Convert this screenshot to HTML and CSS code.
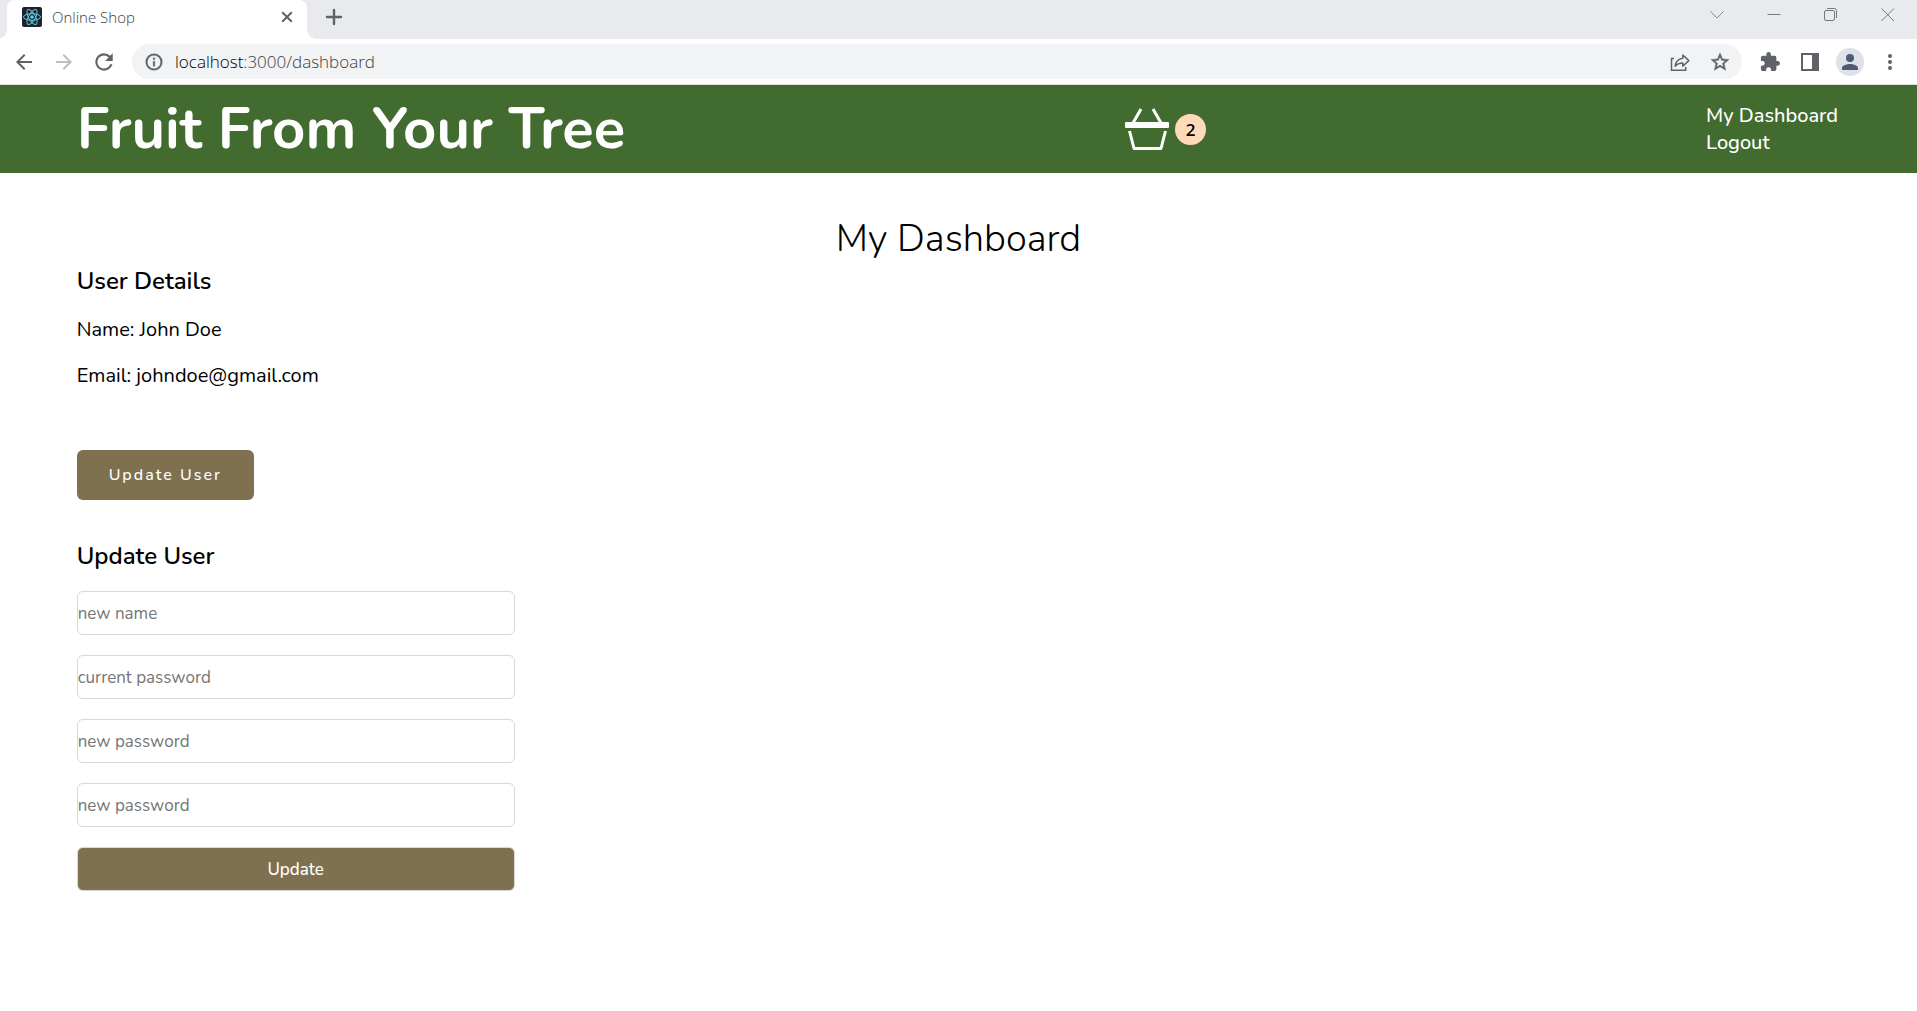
FILE: index.html
```html
<!DOCTYPE html>
<html lang="en">
<head>
<meta charset="utf-8">
<meta name="viewport" content="width=device-width, initial-scale=1">
<title>Online Shop</title>
<link rel="stylesheet" href="styles.css">
</head>
<body>
<div class="browser">
  <div class="tab-strip">
    <div class="tab">
      <svg class="favicon" viewBox="0 0 20 20" width="20" height="20" aria-hidden="true">
        <rect width="20" height="20" rx="2" fill="#20232a"/>
        <g fill="none" stroke="#5fc9e0" stroke-width="1">
          <ellipse cx="10" cy="10" rx="8.5" ry="3.3"/>
          <ellipse cx="10" cy="10" rx="8.5" ry="3.3" transform="rotate(60 10 10)"/>
          <ellipse cx="10" cy="10" rx="8.5" ry="3.3" transform="rotate(120 10 10)"/>
        </g>
        <circle cx="10" cy="10" r="1.7" fill="#61dafb"/>
      </svg>
      <span class="tab-title">Online Shop</span>
      <button class="icon-button" type="button" aria-label="Close tab">
        <svg viewBox="0 0 24 24" width="24" height="24"><path d="M7.2 7.2l9.6 9.6M16.8 7.2l-9.6 9.6" fill="none" stroke="#5f6368" stroke-width="2"/></svg>
      </button>
    </div>
    <button class="icon-button new-tab" type="button" aria-label="New tab">
      <svg viewBox="0 0 24 24" width="24" height="24"><path d="M12 5v14M5 12h14" fill="none" stroke="#5f6368" stroke-width="2.4" stroke-linecap="round"/></svg>
    </button>
    <div class="window-controls">
      <button class="icon-button" type="button" aria-label="Search tabs">
        <svg viewBox="0 0 24 24" width="24" height="24"><path d="M5.5 8.500l6.500 6.500L18.500 8.500" fill="none" stroke="#8b8d91"/></svg>
      </button>
      <button class="icon-button" type="button" aria-label="Minimize">
        <svg viewBox="0 0 24 24" width="24" height="24"><path d="M5.5 11.5h13" fill="none" stroke="#77797d"/></svg>
      </button>
      <button class="icon-button" type="button" aria-label="Restore">
        <svg viewBox="0 0 24 24" width="24" height="24"><g fill="none" stroke="#77797d"><rect x="5.5" y="7.5" width="10" height="10" rx="1.5"/><path d="M8 5.500h7.500a2 2 0 0 1 2 2V15"/></g></svg>
      </button>
      <button class="icon-button" type="button" aria-label="Close">
        <svg viewBox="0 0 24 24" width="24" height="24"><path d="M5.5 5.500l12.500 12.500M18 5.500l-12.500 12.500" fill="none" stroke="#77797d"/></svg>
      </button>
    </div>
  </div>

  <div class="toolbar">
    <button class="icon-button" type="button" aria-label="Back">
      <svg viewBox="0 0 24 24" width="24" height="24"><path d="M20 11H7.830l5.590-5.590L12 4l-8 8 8 8 1.410-1.410L7.830 13H20z" fill="#5f6368"/></svg>
    </button>
    <button class="icon-button" type="button" aria-label="Forward">
      <svg viewBox="0 0 24 24" width="24" height="24"><path d="M4 11h12.170l-5.590-5.590L12 4l8 8-8 8-1.410-1.410L16.170 13H4z" fill="#bcbec0"/></svg>
    </button>
    <button class="icon-button" type="button" aria-label="Reload">
      <svg viewBox="1 1 22 22" width="24" height="24"><path d="M17.650 6.350A7.958 7.958 0 0 0 12 4a8 8 0 1 0 7.730 10h-2.080A6 6 0 1 1 12 6c1.660 0 3.140.690 4.220 1.780L13 11h7V4z" fill="#5f6368"/></svg>
    </button>
    <div class="address-bar">
      <svg viewBox="0 0 24 24" width="20" height="20" aria-hidden="true"><path d="M11 7h2v2h-2zm0 4h2v6h-2zm1-9a10 10 0 1 0 0 20 10 10 0 0 0 0-20zm0 18a8 8 0 1 1 0-16 8 8 0 0 1 0 16z" fill="#5f6368" stroke="#5f6368" stroke-width=".4"/></svg>
      <span class="url"><span class="url-host">localhost</span>:3000/dashboard</span>
      <button class="icon-button" type="button" aria-label="Share">
        <svg viewBox="0 0 24 24" width="24" height="24"><g fill="none" stroke="#5f6368" stroke-width="1.5"><path d="M6 8.500H3.500V20.200h14.200V17"/><path d="M14.800 5l6 5.600-6 5.600v-3.300c-3.600 0-5.800 1-7.600 3.300.5-4.500 3.200-7.300 7.600-7.900z" stroke-linejoin="round"/></g></svg>
      </button>
      <button class="icon-button" type="button" aria-label="Bookmark this page">
        <svg viewBox="1 1 22 22" width="20" height="20"><path d="M22 9.240l-7.190-.620L12 2 9.190 8.630 2 9.240l5.460 4.730L5.820 21 12 17.270 18.180 21l-1.630-7.030L22 9.240zM12 15.400l-3.760 2.270 1-4.280-3.320-2.880 4.380-.380L12 6.100l1.710 4.040 4.380.380-3.320 2.880 1 4.280L12 15.400z" fill="#5f6368" stroke="#5f6368" stroke-width=".5"/></svg>
      </button>
    </div>
    <button class="icon-button" type="button" aria-label="Extensions">
      <svg viewBox="1 1 22 22" width="20" height="20"><path d="M20.500 11H19V7a2 2 0 0 0-2-2h-4V3.500a2.500 2.500 0 0 0-5 0V5H4a2 2 0 0 0-2 2v3.800h1.500a2.700 2.700 0 0 1 0 5.400H2V20a2 2 0 0 0 2 2h3.800v-1.500a2.700 2.700 0 0 1 5.400 0V22H17a2 2 0 0 0 2-2v-4h1.500a2.500 2.500 0 0 0 0-5z" fill="#5f6368"/></svg>
    </button>
    <button class="icon-button" type="button" aria-label="Side panel">
      <svg viewBox="0 0 24 24" width="24" height="24"><path d="M3 3h18v18H3zM5 5v14h9V5z" fill="#5f6368" fill-rule="evenodd"/></svg>
    </button>
    <button class="icon-button" type="button" aria-label="Profile">
      <svg class="profile" viewBox="0 0 24 24" width="24" height="24"><circle cx="12" cy="12" r="14" fill="#dee1e6"/><path d="M12 12a4 4 0 1 0 0-8 4 4 0 0 0 0 8zm0 2c-2.670 0-8 1.340-8 4v2h16v-2c0-2.660-5.330-4-8-4z" fill="#4d5b73"/></svg>
    </button>
    <button class="icon-button" type="button" aria-label="Menu">
      <svg viewBox="0 0 24 24" width="24" height="24"><g fill="#5f6368"><circle cx="12" cy="6" r="2"/><circle cx="12" cy="12" r="2"/><circle cx="12" cy="18" r="2"/></g></svg>
    </button>
  </div>
</div>

<header class="site-header">
  <a class="brand" href="#">Fruit From Your Tree</a>
  <a class="cart" href="#" aria-label="Shopping basket, 2 items">
    <svg viewBox="0 0 44 42" width="44" height="42" aria-hidden="true">
      <rect y="14" width="44" height="6" rx="1" fill="#fff"/>
      <g fill="none" stroke="#fff" stroke-width="3"><path d="M16 1L8 15M28 1l8 14"/><path d="M4.500 23L9 40.500h27L40.500 23" stroke-linejoin="round"/></g>
    </svg>
    <span class="cart-count">2</span>
  </a>
  <nav class="site-nav">
    <a href="#">My Dashboard</a>
    <a href="#">Logout</a>
  </nav>
</header>

<main class="dashboard">
  <h1>My Dashboard</h1>
  <section class="details">
    <h2>User Details</h2>
    <p>Name: John Doe</p>
    <p>Email: johndoe@gmail.com</p>
    <button class="toggle-button" type="button">Update User</button>
  </section>
  <section>
    <h2>Update User</h2>
    <form class="update-form">
      <input type="text" placeholder="new name" aria-label="new name">
      <input type="password" placeholder="current password" aria-label="current password">
      <input type="password" placeholder="new password" aria-label="new password">
      <input type="password" placeholder="new password" aria-label="repeat new password">
      <button type="submit">Update</button>
    </form>
  </section>
</main>
</body>
</html>
```
FILE: styles.css
```css
* {
  box-sizing: border-box;
}

body {
  margin: 0;
  background: #fff;
  color: #000;
  font-family: Nunito, "Open Sans", sans-serif;
  font-size: 20px;
  line-height: 27px;
}

a {
  color: inherit;
  text-decoration: none;
}

button,
input {
  font-family: inherit;
}

/* Browser window */

.browser {
  border-bottom: 1px solid #dcdfdc;
  font-family: "Open Sans", "Noto Sans", sans-serif;
}

.tab-strip {
  display: flex;
  align-items: flex-start;
  height: 39px;
  padding: 0 17px 0 7px;
  background: #e8eaed;
}

.tab {
  position: relative;
  display: flex;
  align-items: center;
  gap: 10px;
  width: 300px;
  height: 39px;
  padding: 0 8px 5px 15px;
  border-radius: 8px 8px 0 0;
  background: #fff;
}

.tab::before,
.tab::after {
  content: "";
  position: absolute;
  bottom: 0;
  width: 10px;
  height: 10px;
}

.tab::before {
  right: 100%;
  background: radial-gradient(circle at 0 0, transparent 10px, #fff 10px);
}

.tab::after {
  left: 100%;
  background: radial-gradient(circle at 100% 0, transparent 10px, #fff 10px);
}

.tab-title {
  flex: 1;
  color: #3c4043;
  font-size: 15px;
  font-weight: 300;
  line-height: 20px;
}

.icon-button {
  display: flex;
  flex: none;
  align-items: center;
  justify-content: center;
  width: 24px;
  height: 24px;
  padding: 0;
  border: 0;
  background: none;
}

.new-tab {
  margin: 5px 0 0 15px;
}

.window-controls {
  display: flex;
  gap: 33px;
  margin: 3px 0 0 auto;
}

.toolbar {
  display: flex;
  align-items: center;
  gap: 16px;
  height: 45px;
  padding: 0 15px 0 12px;
}

.address-bar {
  display: flex;
  flex: 1;
  align-items: center;
  height: 35px;
  padding: 0 10px 0 12px;
  border-radius: 18px;
  background: #f1f3f4;
  gap: 11px;
}

.address-bar .icon-button + .icon-button {
  margin-left: 5px;
}

.url {
  flex: 1;
  color: #3c4043;
  font-size: 17px;
  font-weight: 300;
}

.url-host {
  color: #000;
}

.profile {
  overflow: visible;
}

/* Site header */

.site-header {
  display: flex;
  align-items: center;
  justify-content: space-between;
  min-height: 88px;
  padding: 0 79px 0 4%;
  background: #426b30;
  color: #fff;
}

.brand {
  font-size: 58px;
  font-weight: 700;
  line-height: 80px;
}

.cart {
  display: flex;
  align-items: center;
  gap: 6px;
}

.cart-count {
  width: 31px;
  height: 31px;
  border-radius: 50%;
  background: #ffdab9;
  color: #000;
  font-family: "Open Sans", sans-serif;
  font-size: 17px;
  font-weight: 600;
  line-height: 31px;
  text-align: center;
}

.site-nav {
  display: flex;
  flex-direction: column;
  font-weight: 500;
}

/* Dashboard */

.dashboard {
  padding: 40px 4%;
}

h1 {
  margin: 0;
  font-size: 38px;
  font-weight: 300;
  line-height: 52px;
  text-align: center;
}

h2 {
  margin: 0;
  font-size: 24px;
  font-weight: 600;
  line-height: 32px;
}

.details {
  margin-bottom: 40px;
}

.details p {
  margin: 19px 0 0;
}

.toggle-button {
  display: block;
  height: 50px;
  margin-top: 61px;
  padding: 0 32px;
  border: 0;
  border-radius: 6px;
  background: #7f7050;
  color: #fff;
  font-size: 16px;
  font-weight: 500;
  letter-spacing: 2px;
}

.update-form {
  display: flex;
  flex-direction: column;
  gap: 20px;
  max-width: 438px;
  margin-top: 19px;
}

.update-form input,
.update-form button {
  height: 44px;
  padding: 0;
  border: 1px solid #d9d9d9;
  border-radius: 6px;
  font-size: 17px;
}

.update-form input::placeholder {
  color: #757575;
}

.update-form button {
  background: #7f7050;
  color: #fff;
  font-weight: 500;
}
```
